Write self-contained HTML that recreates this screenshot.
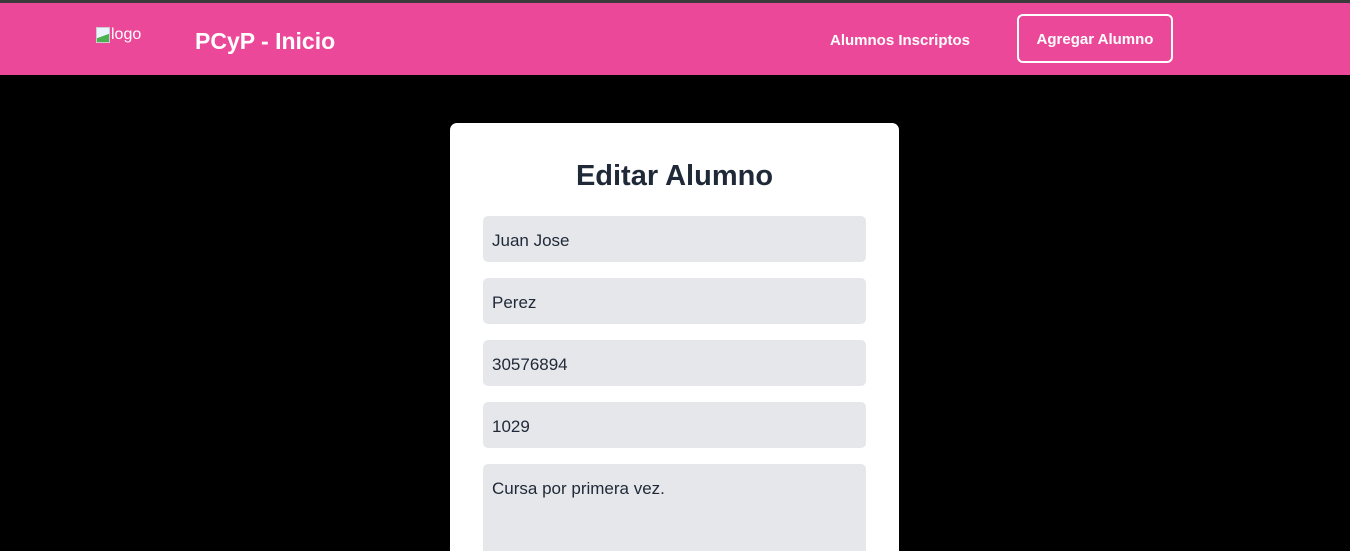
<!DOCTYPE html>
<html><head><meta charset="utf-8"><style>
*{box-sizing:border-box;margin:0;padding:0}
html,body{width:1350px;height:551px;overflow:hidden}
body{background:#000;font-family:"Liberation Sans",sans-serif;position:relative}
.top{height:3px;background:#3a3a3a}
nav{position:absolute;top:3px;left:0;width:1350px;height:72px;background:#ec4899;color:#fff}
.logo{position:absolute;left:96px;top:23px;font-size:16px;display:flex;align-items:center}
.logo i{display:inline-block;width:14px;height:16px;border:1px solid #ccc;background:linear-gradient(160deg,#eaf4ff 55%,#4caf50 56%);margin-right:1px}
.brand{position:absolute;left:195px;top:25px;font-size:23px;font-weight:bold}
.link{position:absolute;left:830px;top:29px;font-size:15px;font-weight:bold}
.btn{position:absolute;left:1017px;top:11px;width:156px;height:49px;border:2px solid #fff;border-radius:6px;font-size:15px;font-weight:bold;display:flex;align-items:center;justify-content:center;padding-top:2px}
.card{position:absolute;left:450px;top:123px;width:449px;height:428px;background:#fff;border-radius:7px 7px 0 0;overflow:hidden}
h1{position:absolute;top:37px;width:100%;text-align:center;font-size:29px;color:#1f2937}
.in{position:absolute;left:33px;width:383px;height:46px;background:#e5e7eb;border-radius:5px;font-size:17px;color:#1f2937;padding:15px 9px}
</style></head><body>
<div class="top"></div>
<nav><div class="logo"><i></i>logo</div><div class="brand">PCyP - Inicio</div><div class="link">Alumnos Inscriptos</div><div class="btn">Agregar Alumno</div></nav>
<div class="card"><h1>Editar Alumno</h1>
<div class="in" style="top:93px">Juan Jose</div>
<div class="in" style="top:155px">Perez</div>
<div class="in" style="top:217px">30576894</div>
<div class="in" style="top:279px">1029</div>
<div class="in" style="top:341px;height:120px">Cursa por primera vez.</div>
</div>
</body></html>
